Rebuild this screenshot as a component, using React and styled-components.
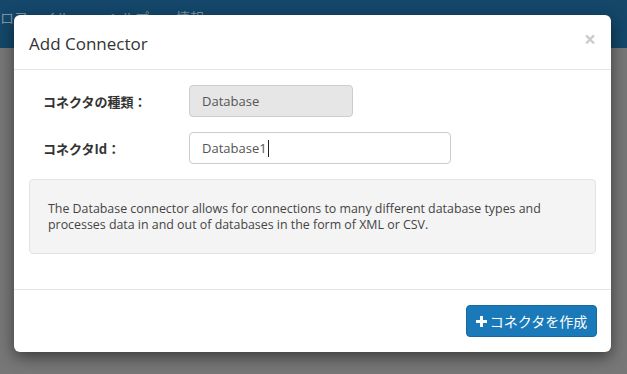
import React from 'react'
import styled, { createGlobalStyle } from 'styled-components'

const Global = createGlobalStyle`
  html, body {
    margin: 0;
    padding: 0;
    height: 100%;
  }
  body {
    background: #777777;
    font-family: "Open Sans", "Noto Sans CJK JP", sans-serif;
    overflow: hidden;
  }
`

const Page = styled.div`
  position: relative;
  width: 627px;
  height: 374px;
  background: #777777;
`

const Navbar = styled.div`
  height: 48px;
  background: #14476a;
  display: flex;
  align-items: flex-start;
`

const NavItem = styled.span`
  font-size: 14px;
  color: #7f95a5;
  padding: 7px 0 0;
  margin-left: ${p => p.offset}px;
  white-space: nowrap;
  font-family: "Noto Sans CJK JP", sans-serif;
`

const Overlay = styled.div`
  position: absolute;
  inset: 0;
  padding: 15px 16px 0 14px;
`

const Modal = styled.div`
  background: #fff;
  border-radius: 6px;
  box-shadow: 0 5px 15px rgba(0, 0, 0, 0.5);
  display: flex;
  flex-direction: column;
`

const Header = styled.div`
  display: flex;
  align-items: center;
  justify-content: space-between;
  height: 54px;
  padding: 0 15px 0 15px;
  border-bottom: 1px solid #e5e5e5;
`

const Title = styled.h4`
  margin: 0;
  font-size: 17px;
  font-weight: 400;
  color: #333;
  padding-top: 2px;
`

const Close = styled.span`
  font-size: 21px;
  font-weight: 700;
  color: #000;
  opacity: 0.2;
  line-height: 1;
  margin-top: -5px;
  margin-right: 0;
`

const Body = styled.div`
  padding: 15px;
  display: flex;
  flex-direction: column;
  gap: 15px;
`

const Row = styled.div`
  display: grid;
  grid-template-columns: 160px ${p => p.width}px;
  align-items: center;
`

const Label = styled.label`
  padding-left: 14px;
  font-size: 13px;
  font-weight: 700;
  color: #333;
  font-family: "Noto Sans CJK JP", sans-serif;
`

const Field = styled.div`
  box-sizing: border-box;
  height: 32px;
  display: flex;
  align-items: center;
  padding: 0 12px;
  border: 1px solid #cccccc;
  border-radius: 4px;
  background: ${p => (p.disabled ? '#e6e6e6' : '#fff')};
  font-size: 13px;
  color: #555;
`

const Caret = styled.span`
  display: inline-block;
  width: 1px;
  height: 17px;
  background: #222;
  margin-left: 1px;
`

const Well = styled.div`
  margin-bottom: 20px;
  background: #f4f4f4;
  border: 1px solid #e3e3e3;
  border-radius: 4px;
  padding: 19px 18px 19px 18px;
  font-size: 12.4px;
  line-height: 16px;
  color: #444;
  height: 75px;
  box-sizing: border-box;
  display: flex;
  align-items: center;
`

const Footer = styled.div`
  border-top: 1px solid #e5e5e5;
  padding: 15px 14px 15px 15px;
  display: flex;
  justify-content: flex-end;
`

const Button = styled.button`
  height: 32px;
  width: 131px;
  border: 1px solid #166a9f;
  border-radius: 4px;
  background: #1a7ab9;
  color: #fff;
  font-size: 14px;
  font-family: "Noto Sans CJK JP", sans-serif;
  display: flex;
  align-items: center;
  justify-content: center;
  gap: 3px;
  padding: 0;
`

const PlusIcon = () => (
  <svg width="11" height="11" viewBox="0 0 11 11">
    <path d="M4 0h3v4h4v3H7v4H4V7H0V4h4z" fill="#fff" />
  </svg>
)

export default function App() {
  return (
    <Page>
      <Global />
      <Navbar>
        <NavItem offset={-14}>プロファイル</NavItem>
        <NavItem offset={37}>ヘルプ</NavItem>
        <NavItem offset={27}>情報</NavItem>
      </Navbar>

      <Overlay>
        <Modal>
          <Header>
            <Title>Add Connector</Title>
            <Close>×</Close>
          </Header>

          <Body>
            <Row width={164}>
              <Label>コネクタの種類：</Label>
              <Field disabled>Database</Field>
            </Row>
            <Row width={262}>
              <Label>コネクタId：</Label>
              <Field>
                Database1<Caret />
              </Field>
            </Row>
            <Well>
              The Database connector allows for connections to many different database types and
              processes data in and out of databases in the form of XML or CSV.
            </Well>
          </Body>

          <Footer>
            <Button>
              <PlusIcon />
              コネクタを作成
            </Button>
          </Footer>
        </Modal>
      </Overlay>
    </Page>
  )
}
